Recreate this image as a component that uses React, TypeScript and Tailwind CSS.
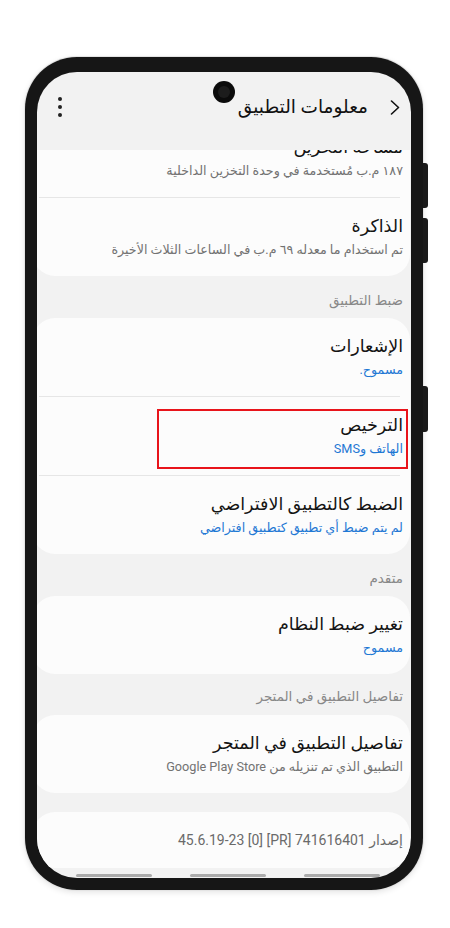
import React from "react";

const FONT = { fontFamily: '"Roboto", "Noto Sans", "DejaVu Sans", sans-serif' };

function Item({
  title,
  sub,
  blue,
  children,
}: {
  title: string;
  sub: string;
  blue?: boolean;
  children?: React.ReactNode;
}) {
  return (
    <div className="relative pt-[15px] pb-[15px] pr-[7px] pl-[12px]">
      <div className="text-[17.5px] leading-[26px] text-[#141414]">{title}</div>
      <div
        className={
          blue
            ? "text-[12.7px] leading-[22px] text-[#1f78d4]"
            : "text-[12.7px] leading-[22px] text-[#727272]"
        }
      >
        {sub}
      </div>
      {children}
    </div>
  );
}

function Divider() {
  return <div className="h-px bg-[#e6e6e6] ml-[6px] mr-[10px]" />;
}

function Section({ label, tight }: { label: string; tight?: boolean }) {
  return (
    <div
      className={
        tight
          ? "pt-[12px] pb-[9px] pr-[8px] text-[13.5px] leading-[20px] text-[#888888]"
          : "pt-[14px] pb-[8px] pr-[8px] text-[13.5px] leading-[20px] text-[#888888]"
      }
    >
      {label}
    </div>
  );
}

function Card({ children, className = "" }: { children: React.ReactNode; className?: string }) {
  return (
    <div className={"bg-[#fcfcfc] rounded-[22px] ml-[-4px] mr-[1px] " + className}>{children}</div>
  );
}

export default function App() {
  return (
    <div className="w-[450px] h-[928px] bg-white pt-[57px] pl-[25px]" style={FONT}>
      <div className="relative w-[398px] h-[833px]">
        {/* side buttons */}
        <div className="absolute right-[-5px] top-[106px] w-[5px] h-[45px] rounded-r-[3px] bg-[#1a1a1a]" />
        <div className="absolute right-[-5px] top-[161px] w-[5px] h-[45px] rounded-r-[3px] bg-[#1a1a1a]" />
        <div className="absolute right-[-5px] top-[329px] w-[5px] h-[46px] rounded-r-[3px] bg-[#1a1a1a]" />

        <div className="w-full h-full rounded-[52px] bg-[#161616] pt-[15px] px-[12px] pb-[12px] shadow-[0_0_0_1px_#e4e4e4,0_2px_6px_rgba(0,0,0,0.12)]">
          <div
            dir="rtl"
            className="relative w-full h-full rounded-[40px] overflow-hidden bg-[#f2f2f2] flex flex-col"
          >
            {/* camera */}
            <div className="absolute left-[176px] top-[9px] w-[22px] h-[22px] rounded-full bg-[#0b0b0b] flex items-center justify-center">
              <div className="w-[12px] h-[12px] rounded-full bg-[#1c1c1c]" />
            </div>

            {/* header */}
            <div className="h-[78px] shrink-0 flex items-center pb-[8px] pr-[11px] pl-[21px]">
              <svg width="10" height="15" viewBox="0 0 10 15" className="shrink-0">
                <path d="M1.5 1 L8.5 7.5 L1.5 14" fill="none" stroke="#111" strokeWidth="1.6" strokeLinecap="round" strokeLinejoin="round" />
              </svg>
              <div className="mr-[22px] text-[18.5px] leading-[28px] text-[#111]">معلومات التطبيق</div>
              <div className="mr-auto flex flex-col gap-[4px]">
                <div className="w-[4px] h-[4px] rounded-full bg-[#222]" />
                <div className="w-[4px] h-[4px] rounded-full bg-[#222]" />
                <div className="w-[4px] h-[4px] rounded-full bg-[#222]" />
              </div>
            </div>

            {/* scrolling content */}
            <div className="flex-1 overflow-hidden flex flex-col">
              <Card className="mt-[-31px]">
                <Item title="مساحة التخزين" sub="١٨٧ م.ب مُستخدمة في وحدة التخزين الداخلية" />
                <Divider />
                <Item title="الذاكرة" sub="تم استخدام ما معدله ٦٩ م.ب في الساعات الثلاث الأخيرة" />
              </Card>

              <Section label="ضبط التطبيق" />
              <Card>
                <Item title="الإشعارات" sub="مسموح." blue />
                <Divider />
                <Item title="الترخيص" sub="الهاتف وSMS" blue>
                  <div className="absolute right-[2px] top-[12px] w-[251px] h-[60px] border-2 border-[#e8141b]" />
                </Item>
                <Divider />
                <Item title="الضبط كالتطبيق الافتراضي" sub="لم يتم ضبط أي تطبيق كتطبيق افتراضي" blue />
              </Card>

              <Section label="متقدم" />
              <Card>
                <Item title="تغيير ضبط النظام" sub="مسموح" blue />
              </Card>

              <Section label="تفاصيل التطبيق في المتجر" tight />
              <Card>
                <Item title="تفاصيل التطبيق في المتجر" sub="التطبيق الذي تم تنزيله من Google Play Store" />
              </Card>

              <Card className="mt-[19px]">
                <div className="h-[56px] flex items-center pr-[7px] text-[14px] text-[#6a6a6a]">
                  إصدار 741616401 [PR] [0] 45.6.19-23
                </div>
              </Card>

              <div dir="ltr" className="flex justify-center gap-[38px] pl-[8px] mt-[6px]">
                <div className="w-[76px] h-[3px] rounded-full bg-[#ababab]" />
                <div className="w-[76px] h-[3px] rounded-full bg-[#ababab]" />
                <div className="w-[76px] h-[3px] rounded-full bg-[#ababab]" />
              </div>
            </div>
          </div>
        </div>
      </div>
    </div>
  );
}
